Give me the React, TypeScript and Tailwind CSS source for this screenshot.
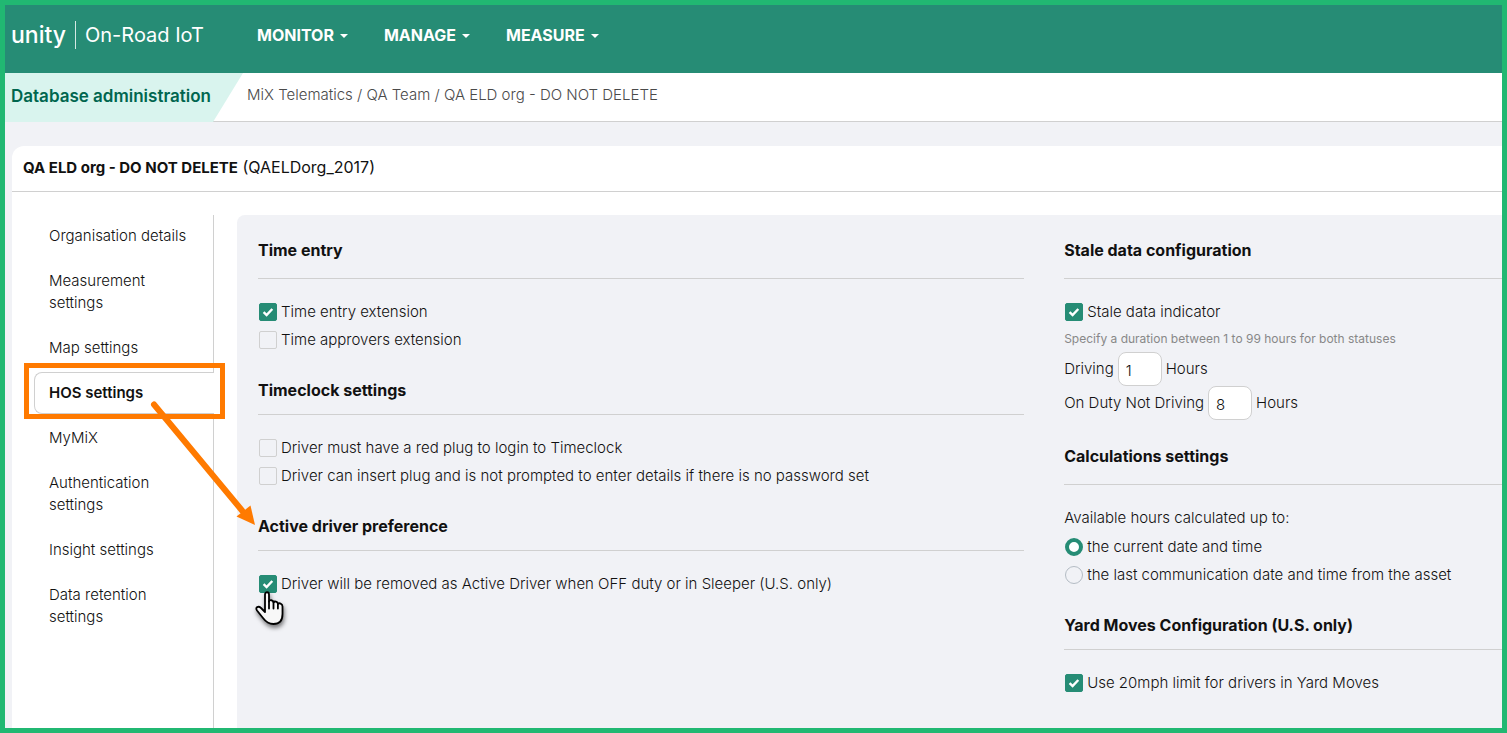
import type { ReactNode } from "react";
import clsx from "clsx";

const menus = ["MONITOR", "MANAGE", "MEASURE"];

const navItems = [
  "Organisation details",
  "Measurement settings",
  "Map settings",
  "HOS settings",
  "MyMiX",
  "Authentication settings",
  "Insight settings",
  "Data retention settings",
];

function Section({ title, large, children }: { title: string; large?: boolean; children: ReactNode }) {
  return (
    <section className="mb-6">
      <h2
        className={clsx(
          "mb-[19px] border-b border-[#d0d0d0] text-base leading-6 font-bold",
          large ? "pb-4" : "pb-3"
        )}
      >
        {title}
      </h2>
      {children}
    </section>
  );
}

function Checkbox({ label, checked, children }: { label: string; checked?: boolean; children?: ReactNode }) {
  return (
    <label className="flex h-7 items-center gap-1 pl-px">
      <span className="relative flex size-[18px] shrink-0">
        <input
          type="checkbox"
          defaultChecked={checked}
          className="peer size-[18px] appearance-none rounded-xs border border-[#d0d0d0] checked:border-[#268c75] checked:bg-[#268c75]"
        />
        <svg
          viewBox="0 0 18 18"
          className="pointer-events-none absolute inset-0 hidden size-[18px] peer-checked:block"
          fill="none"
          stroke="#fff"
          strokeWidth="2.4"
        >
          <path d="M4.6 9.2 7.6 12.1 13.3 6" />
        </svg>
        {children}
      </span>
      {label}
    </label>
  );
}

function Radio({ label, checked }: { label: string; checked?: boolean }) {
  return (
    <label className="flex h-7 items-center gap-1 pl-px">
      <input
        type="radio"
        name="hours-until"
        defaultChecked={checked}
        className="size-[18px] shrink-0 appearance-none rounded-full border border-[#b4bcc4] checked:border-4 checked:border-[#268c75] checked:bg-white"
      />
      {label}
    </label>
  );
}

function HoursField({ label, value }: { label: string; value: string }) {
  return (
    <label className="flex h-[34px] items-center gap-1">
      {label}
      <input
        type="text"
        defaultValue={value}
        className="h-[34px] w-11 rounded-lg border border-[#d0d0d0] bg-white px-[7px] pt-0.5"
      />
      Hours
    </label>
  );
}

function HandCursor() {
  return (
    <svg
      viewBox="0 0 30 38"
      className="pointer-events-none absolute top-4 -left-1 z-10 h-[38px] w-[30px] overflow-visible drop-shadow-[1px_3px_2px_rgba(0,0,0,0.5)]"
      fill="#f8f8f8"
      stroke="#000"
      strokeWidth="1.8"
      strokeLinejoin="round"
      strokeLinecap="round"
    >
      <path d="M10 21V3.500C10 .5 14 .5 14 3.500V10.500C14.500 8.500 18.300 8.800 18.500 11.500C19.300 9.800 22.700 10.500 22.900 13C24 11.500 27.500 12.500 27.500 15.500V23C27.500 29.500 24 33 18.500 33C13.500 33 10.500 30.500 8 27L2 19.500C-.3 16 3.500 14.700 6 17L10 21Z" />
      <path d="M14 10.500V17.500M18.500 11.500V17.500M22.900 13V17.500" fill="none" />
    </svg>
  );
}

// orange frame and arrow pointing from the menu item to the setting
function Callout() {
  return (
    <>
      <span className="pointer-events-none absolute -top-[10px] -left-[11px] z-10 h-14 w-[201px] border-5 border-[#ff7a00]" />
      <svg
        viewBox="0 0 110 130"
        className="pointer-events-none absolute top-[27px] left-[114px] z-20 h-[130px] w-[110px]"
        fill="#ff7a00"
      >
        <path d="M5 4.500 93 110.500" stroke="#ff7a00" strokeWidth="6" strokeLinecap="round" />
        <path d="M106 125 87.500 116.500 101.500 105.500Z" />
      </svg>
    </>
  );
}

export default function App() {
  return (
    <div className="flex min-h-screen flex-col overflow-hidden border-5 border-[#21b872] bg-[#f1f2f6] font-[Inter,sans-serif] text-[15px] leading-[22px] font-light text-[#111]">
      <header className="flex h-[68px] items-center bg-[#268c75] pb-2 text-white">
        <div className="flex w-[252px] items-center pl-[6px]">
          <span className="text-[23px] leading-7 font-medium">unity</span>
          <span className="mx-[9px] h-7 w-px bg-white/80" />
          <span className="text-xl font-normal">On-Road IoT</span>
        </div>
        <nav className="flex gap-9">
          {menus.map((menu) => (
            <button key={menu} className="flex items-center gap-[6px] text-base font-bold">
              {menu}
              <svg viewBox="0 0 8 4" className="mt-0.5 h-1 w-2" fill="currentColor">
                <path d="M0 0H8L4 4Z" />
              </svg>
            </button>
          ))}
        </nav>
      </header>

      <div className="flex h-[49px] border-b border-[#d0d0d0] bg-white">
        <div className="-mb-px flex w-[238px] shrink-0 items-center bg-[#d9f4ee] pb-1 pl-[6px] text-[17px] font-semibold text-[#00664f] [clip-path:polygon(0_0,100%_0,208px_100%,0_100%)]">
          Database administration
        </div>
        <div className="flex items-center pb-1 pl-1 text-[#4a4a4a]">
          MiX Telematics / QA Team / QA ELD org - DO NOT DELETE
        </div>
      </div>

      <main className="mt-6 ml-[7px] flex grow flex-col rounded-tl-xl bg-white">
        <h1 className="h-[46px] border-b border-[#d0d0d0] pt-[10px] pl-[11px] text-base leading-[22px] font-normal">
          <b className="text-[15px] font-bold">QA ELD org - DO NOT DELETE</b> (QAELDorg_2017)
        </h1>

        <div className="flex grow pt-[23px]">
          <nav className="mr-[23px] w-[202px] shrink-0 border-r border-[#d0d0d0] pl-[22px]">
            <ul className="flex flex-col gap-[3px]">
              {navItems.map((item) => {
                const active = item === "HOS settings";
                return (
                  <li
                    key={item}
                    className={clsx(
                      "relative -mr-px rounded-l-lg border border-r-0 py-[9px] pr-5 pl-[14px]",
                      active ? "border-[#d0d0d0] bg-white font-semibold" : "border-transparent"
                    )}
                  >
                    <a href="#" className="block">
                      {item}
                    </a>
                    {active && <Callout />}
                  </li>
                );
              })}
            </ul>
          </nav>

          <div className="grid grow grid-cols-[7fr_4fr] gap-10 rounded-tl-lg bg-[#f1f2f6] pt-[23px] pl-[21px]">
            <div>
              <Section title="Time entry" large>
                <Checkbox label="Time entry extension" checked />
                <Checkbox label="Time approvers extension" />
              </Section>
              <Section title="Timeclock settings">
                <Checkbox label="Driver must have a red plug to login to Timeclock" />
                <Checkbox label="Driver can insert plug and is not prompted to enter details if there is no password set" />
              </Section>
              <Section title="Active driver preference">
                <Checkbox label="Driver will be removed as Active Driver when OFF duty or in Sleeper (U.S. only)" checked>
                  <HandCursor />
                </Checkbox>
              </Section>
            </div>

            <div>
              <Section title="Stale data configuration" large>
                <Checkbox label="Stale data indicator" checked />
                <p className="text-xs leading-[26px] font-normal text-[#888]">
                  Specify a duration between 1 to 99 hours for both statuses
                </p>
                <HoursField label="Driving" value="1" />
                <HoursField label="On Duty Not Driving" value="8" />
              </Section>
              <Section title="Calculations settings" large>
                <p className="mb-px leading-7">Available hours calculated up to:</p>
                <Radio label="the current date and time" checked />
                <Radio label="the last communication date and time from the asset" />
              </Section>
              <Section title="Yard Moves Configuration (U.S. only)">
                <Checkbox label="Use 20mph limit for drivers in Yard Moves" checked />
              </Section>
            </div>
          </div>
        </div>
      </main>
    </div>
  );
}
